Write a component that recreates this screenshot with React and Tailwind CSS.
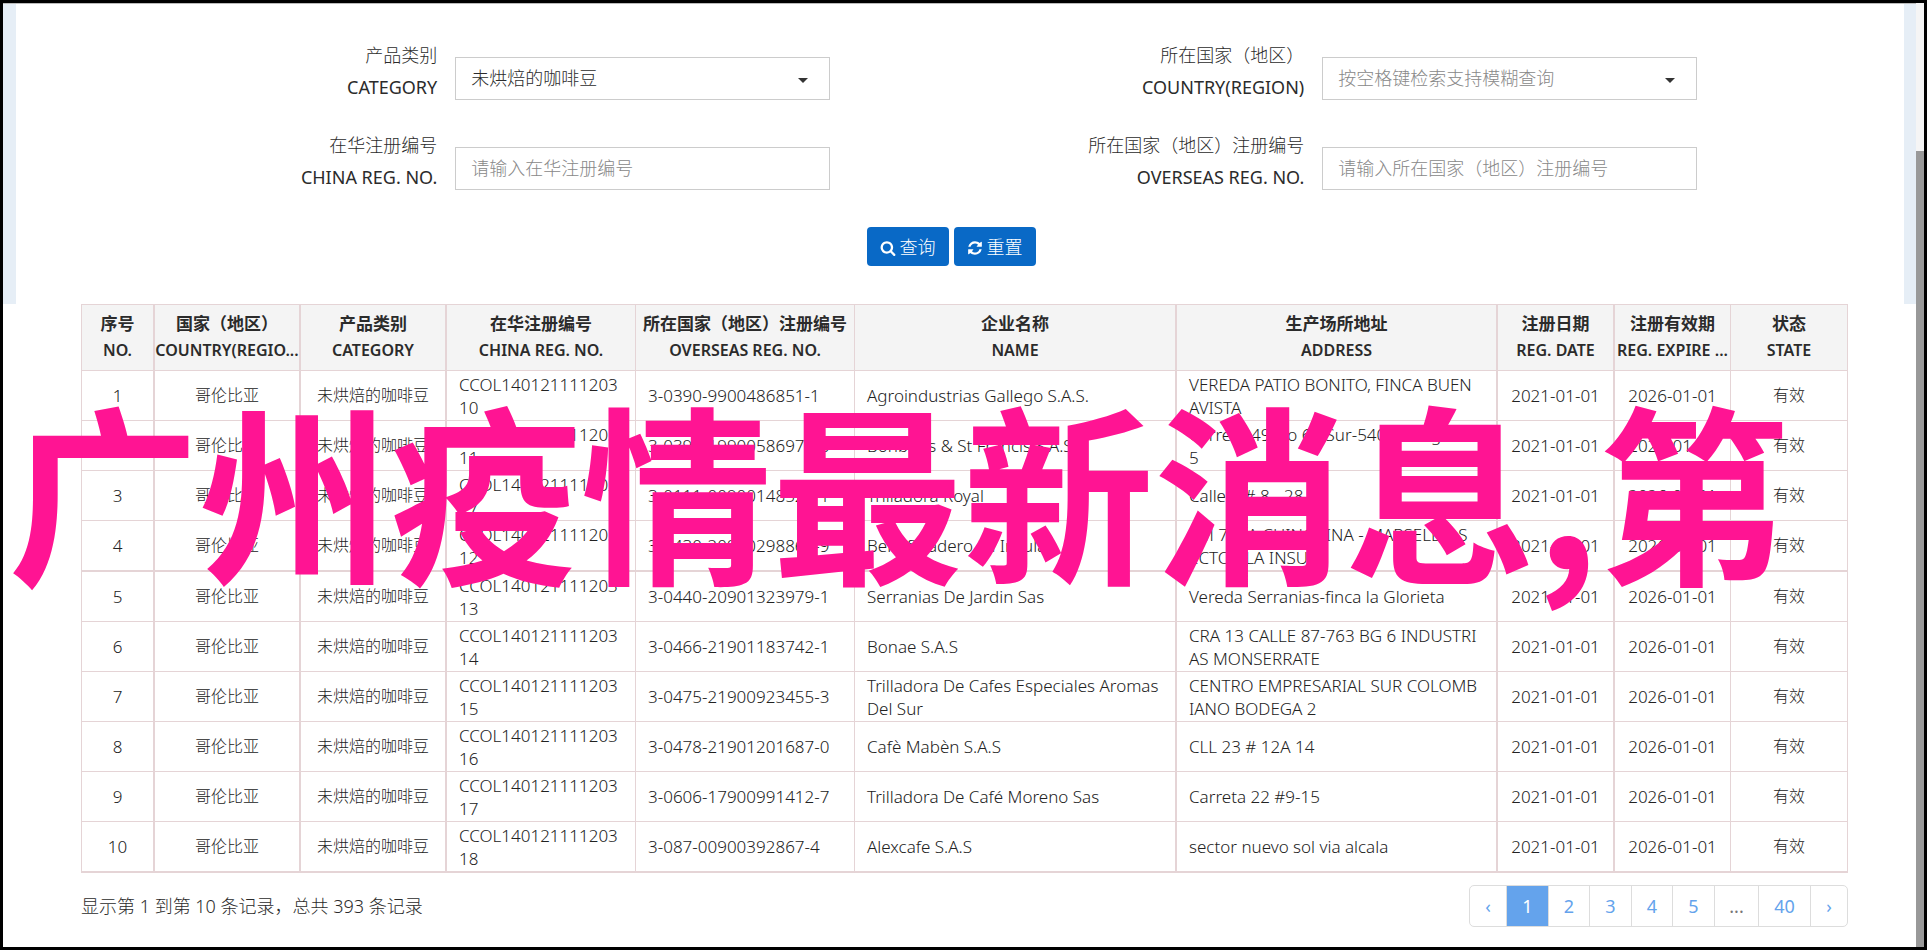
import React from "react";

const rows = [
  ["1", "CCOL140121111203\n10", "3-0390-9900486851-1", "Agroindustrias Gallego S.A.S.", "VEREDA PATIO BONITO, FINCA BUEN\nAVISTA"],
  ["2", "CCOL140121111203\n11", "3-0391-19900586973-6", "Bonbons & St Francis S.A.S", "Carrera 49 No 61 Sur-540 Bodega 1\n5"],
  ["3", "CCOL140121111202\n27", "3-0111-00900148526-1", "Trilladora Royal", "Calle 7 # 8 - 28"],
  ["4", "CCOL140121111203\n12", "3-0430-20900298863-9", "Beneficiadero La Insula", "KM 7 VÍA CHINCHINA - MARSELLA, S\nECTOR LA INSULA"],
  ["5", "CCOL140121111203\n13", "3-0440-20901323979-1", "Serranias De Jardin Sas", "Vereda Serranias-finca la Glorieta"],
  ["6", "CCOL140121111203\n14", "3-0466-21901183742-1", "Bonae S.A.S", "CRA 13 CALLE 87-763 BG 6 INDUSTRI\nAS MONSERRATE"],
  ["7", "CCOL140121111203\n15", "3-0475-21900923455-3", "Trilladora De Cafes Especiales Aromas\nDel Sur", "CENTRO EMPRESARIAL SUR COLOMB\nIANO BODEGA 2"],
  ["8", "CCOL140121111203\n16", "3-0478-21901201687-0", "Cafè Mabèn S.A.S", "CLL 23 # 12A 14"],
  ["9", "CCOL140121111203\n17", "3-0606-17900991412-7", "Trilladora De Café Moreno Sas", "Carreta 22 #9-15"],
  ["10", "CCOL140121111203\n18", "3-087-00900392867-4", "Alexcafe S.A.S", "sector nuevo sol via alcala"],
];

const columns = [
  { zh: "序号", en: "NO.", width: "w-[73px]", edge: "border-r-2", cell: "text-center text-[17px]" },
  { zh: "国家（地区）", en: "COUNTRY(REGIO...", width: "w-[146px]", edge: "border-r-2", cell: "text-center text-[16px]" },
  { zh: "产品类别", en: "CATEGORY", width: "w-[146px]", edge: "border-r-2", cell: "text-center text-[16px]" },
  { zh: "在华注册编号", en: "CHINA REG. NO.", width: "w-[189px]", edge: "border-r", cell: "pl-[12px] text-left text-[17px]" },
  { zh: "所在国家（地区）注册编号", en: "OVERSEAS REG. NO.", width: "w-[219px]", edge: "border-r", cell: "pl-[12px] text-left text-[17px]" },
  { zh: "企业名称", en: "NAME", width: "w-[322px]", edge: "border-r-2", cell: "pl-[12px] text-left text-[17px]" },
  { zh: "生产场所地址", en: "ADDRESS", width: "w-[321px]", edge: "border-r-2", cell: "pl-[12px] text-left text-[17px]" },
  { zh: "注册日期", en: "REG. DATE", width: "w-[117px]", edge: "border-r-2", cell: "text-center text-[17px]" },
  { zh: "注册有效期", en: "REG. EXPIRE ...", width: "w-[116px]", edge: "border-r", cell: "text-center text-[17px]" },
  { zh: "状态", en: "STATE", width: "w-[117px]", edge: "border-r", cell: "text-center text-[16px]" },
];

const pages = [
  { label: "‹", width: "w-[37px]", name: "上一页" },
  { label: "1", width: "w-[42px]", active: true },
  { label: "2", width: "w-[41px]" },
  { label: "3", width: "w-[42px]" },
  { label: "4", width: "w-[41px]" },
  { label: "5", width: "w-[42px]" },
  { label: "...", width: "w-[44px]", gap: true },
  { label: "40", width: "w-[52px]" },
  { label: "›", width: "w-[36px]", name: "下一页" },
];

const control =
  "block h-[43px] w-full appearance-none rounded-none border border-[#ccc] bg-white px-[15px] pb-[2px] text-[18px] leading-[24px] font-light placeholder:text-[#888] placeholder:opacity-100 outline-none";

const button =
  "flex h-[39px] items-center gap-1 rounded-[4px] bg-[#0969c6] px-[13px] text-[18px] leading-6 text-white";

function SearchIcon() {
  return (
    <svg viewBox="0 0 1792 1792" className="mt-[2px] h-4 w-4" fill="currentColor" aria-hidden="true">
      <path d="M1216 832q0-185-131.500-316.500t-316.500-131.500-316.500 131.500-131.500 316.500 131.500 316.500 316.500 131.500 316.500-131.500 131.500-316.500zM1728 1664q0 52-38 90t-90 38q-54 0-90-38l-343-342q-179 124-399 124-143 0-273.500-55.500t-225-150-150-225-55.500-273.500 55.500-273.500 150-225 225-150 273.500-55.500 273.500 55.500 225 150 150 225 55.500 273.500q0 220-124 399l343 343q37 37 37 90z" />
    </svg>
  );
}

function RefreshIcon() {
  return (
    <svg viewBox="0 0 1792 1792" className="mt-[2px] h-4 w-4" fill="currentColor" aria-hidden="true">
      <path d="M1639 1056q0 5-1 7-64 268-268 434.500t-478 166.500q-146 0-282.500-55t-243.500-157l-129 129q-19 19-45 19t-45-19-19-45v-448q0-26 19-45t45-19h448q26 0 45 19t19 45-19 45l-137 137q71 66 161 102t187 36q134 0 250-65t186-179q11-17 53-117 8-23 30-23h192q13 0 22.500 9.500t9.500 22.500zM1664 256v448q0 26-19 45t-45 19h-448q-26 0-45-19t-19-45 19-45l138-138q-148-137-349-137-134 0-250 65t-186 179q-11 17-53 117-8 23-30 23h-199q-13 0-22.500-9.500t-9.500-22.500v-7q65-268 270-434.500t480-166.500q146 0 284 55.500t245 156.500l130-129q19-19 45-19t45 19 19 45z" />
    </svg>
  );
}

function Field({ id, zh, en, children }) {
  return (
    <div className="flex items-start">
      <label htmlFor={id} className="w-5/12 shrink-0 pr-[18px] text-right text-[18px] leading-8">
        <span className="block">{zh}</span>
        <span className="block font-normal">{en}</span>
      </label>
      <div className="relative mt-[18px] w-[375px]">{children}</div>
    </div>
  );
}

function Caret() {
  return (
    <svg viewBox="0 0 10 5" className="pointer-events-none absolute top-[21px] right-[22px] h-[5px] w-[10px]" fill="#333" aria-hidden="true">
      <path d="M0 0h10L5 5z" />
    </svg>
  );
}

function SearchForm() {
  return (
    <form className="bg-[#e6eef6] pr-[12px] pl-[13px]" onSubmit={(e) => e.preventDefault()}>
      <div className="bg-white pt-[35px] pr-[76px] pb-[38px] pl-[78px]">
        <div className="grid grid-cols-2 gap-y-[26px]">
          <Field id="category" zh="产品类别" en="CATEGORY">
            <select id="category" className={control}>
              <option>未烘焙的咖啡豆</option>
            </select>
            <Caret />
          </Field>
          <Field id="country" zh="所在国家（地区）" en="COUNTRY(REGION)">
            <select id="country" className={control + " text-[#888]"}>
              <option>按空格键检索支持模糊查询</option>
            </select>
            <Caret />
          </Field>
          <Field id="china-no" zh="在华注册编号" en="CHINA REG. NO.">
            <input id="china-no" type="text" placeholder="请输入在华注册编号" className={control} />
          </Field>
          <Field id="overseas-no" zh="所在国家（地区）注册编号" en="OVERSEAS REG. NO.">
            <input id="overseas-no" type="text" placeholder="请输入所在国家（地区）注册编号" className={control} />
          </Field>
        </div>
        <div className="mt-[34px] flex justify-center gap-[5px] pr-[20px]">
          <button type="submit" className={button}>
            <SearchIcon />
            查询
          </button>
          <button type="reset" className={button}>
            <RefreshIcon />
            重置
          </button>
        </div>
      </div>
    </form>
  );
}

function ResultTable() {
  return (
    <table className="w-full table-fixed border-separate border-spacing-0 border-t border-l border-[#e5d4d6] leading-[23px]">
      <thead>
        <tr className="bg-[#f4f4f4]">
          {columns.map((c) => (
            <th key={c.en} scope="col" className={`${c.width} ${c.edge} h-[66px] overflow-hidden border-b border-[#e5d4d6] p-0 pb-px font-semibold whitespace-nowrap`}>
              <span className="block text-[17px] leading-[27px]">{c.zh}</span>
              <span className="block text-[16px] leading-[27px]">{c.en}</span>
            </th>
          ))}
        </tr>
      </thead>
      <tbody className="text-[#222]">
        {rows.map(([no, reg, overseas, name, address]) => {
          const cells = [no, "哥伦比亚", "未烘焙的咖啡豆", reg, overseas, name, address, "2021-01-01", "2026-01-01", "有效"];
          const bottom = no === "4" || no === "10" ? "h-[51px] border-b-2" : "h-[50px] border-b";
          return (
            <tr key={no}>
              {cells.map((text, i) => (
                <td
                  key={columns[i].en}
                  className={`${columns[i].edge} ${columns[i].cell} ${bottom} border-[#e5d4d6] py-0 align-middle whitespace-pre`}
                >
                  {text}
                </td>
              ))}
            </tr>
          );
        })}
      </tbody>
    </table>
  );
}

function Pagination() {
  return (
    <nav aria-label="分页" className="flex h-[42px] overflow-hidden rounded-[5px] border border-[#ddd] text-[18px] leading-6 font-normal">
      {pages.map((p, i) => {
        const edge = i === pages.length - 1 ? "" : "border-r border-[#ddd]";
        const base = `${p.width} ${edge} flex items-center justify-center`;
        if (p.gap) return <span key={p.label} className={`${base} text-[#777]`}>{p.label}</span>;
        return (
          <a key={p.label} href="#" aria-label={p.name} className={`${base} ${p.active ? "bg-[#64a3ec] text-white" : "text-[#64a3ec]"}`}>
            {p.label}
          </a>
        );
      })}
    </nav>
  );
}

export default function App() {
  return (
    <div className="relative flex min-h-screen overflow-hidden border-[3px] border-black bg-white font-['Noto_Sans','Noto_Sans_CJK_SC',sans-serif] font-light text-[#2b2b2b]">
      <main className="min-w-0 flex-1 border-t border-[#bbb]">
        <SearchForm />
        <section className="pr-[68px] pl-[78px]">
          <ResultTable />
          <div className="mt-[12px] flex items-center justify-between">
            <p className="text-[18px] leading-6">显示第 1 到第 10 条记录，总共 393 条记录</p>
            <Pagination />
          </div>
        </section>
      </main>
      <div className="w-[8px] shrink-0 bg-[#f5f5f5] pt-[148px]">
        <div className="h-full bg-[#999]" />
      </div>
      <div className="pointer-events-none absolute top-[344px] left-[5px] text-[191px] leading-[280px] font-bold whitespace-nowrap text-[#ff1493] font-['Noto_Sans_CJK_SC',sans-serif]">
        广州疫情最新消息,第
      </div>
    </div>
  );
}
